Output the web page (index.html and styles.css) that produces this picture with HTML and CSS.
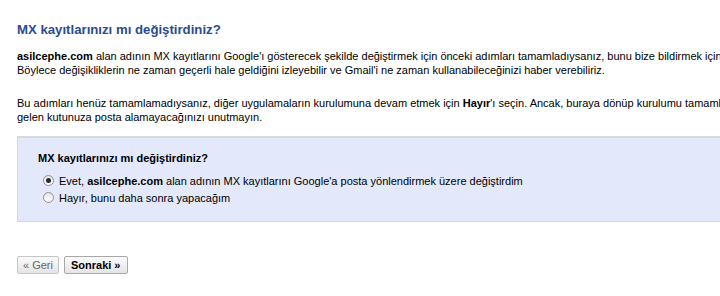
FILE: index.html
```html
<!DOCTYPE html>
<html lang="tr">
<head>
  <meta charset="UTF-8" />
  <title>MX kayıtları</title>
  <link rel="stylesheet" href="styles.css">
</head>
<body>
  <div class="page">
    <h2>MX kayıtlarınızı mı değiştirdiniz?</h2>
    <p><b>asilcephe.com</b> alan adının MX kayıtlarını Google'ı gösterecek şekilde değiştirmek için önceki adımları tamamladıysanız, bunu bize bildirmek için <b>Evet</b>'i seçin.<br>
    Böylece değişikliklerin ne zaman geçerli hale geldiğini izleyebilir ve Gmail'i ne zaman kullanabileceğinizi haber verebiliriz.</p>
    <p class="last">Bu adımları henüz tamamlamadıysanız, diğer uygulamaların kurulumuna devam etmek için <b>Hayır</b>'ı seçin. Ancak, buraya dönüp kurulumu tamamlayana kadar<br>
    gelen kutunuza posta alamayacağınızı unutmayın.</p>

    <div class="question-box">
      <div class="question-title">MX kayıtlarınızı mı değiştirdiniz?</div>
      <label class="option"><input type="radio" name="mx" checked><span>Evet, <b>asilcephe.com</b> alan adının MX kayıtlarını Google'a posta yönlendirmek üzere değiştirdim</span></label>
      <label class="option"><input type="radio" name="mx"><span>Hayır, bunu daha sonra yapacağım</span></label>
    </div>

    <div class="buttons">
      <button class="btn">« Geri</button>
      <button class="btn primary">Sonraki »</button>
    </div>
  </div>
</body>
</html>
```

FILE: styles.css
```css
* {
  box-sizing: border-box;
  margin: 0;
  padding: 0;
}

body {
  background: #fff;
  font-family: "Liberation Sans", Arial, sans-serif;
  font-size: 11px;
  color: #000;
  overflow: hidden;
}

.page {
  padding: 22px 0 0 17px;
  width: 900px;
}

h2 {
  font-size: 13.2px;
  font-weight: bold;
  color: #2a4b92;
  line-height: 16px;
  margin-bottom: 11px;
}

p {
  line-height: 14px;
  margin-bottom: 19px;
  white-space: nowrap;
}

p.last {
  margin-bottom: 12px;
}

.question-box {
  background: #e3e8fb;
  border-top: 2px solid #d6d8de;
  border-left: 1px solid #d6d8de;
  border-bottom: 1px solid #d6d8de;
  padding: 14px 0 15px 20px;
}

.question-title {
  font-weight: bold;
  margin-bottom: 8px;
}

.option {
  display: flex;
  align-items: center;
  gap: 5px;
  height: 17px;
  padding-left: 5px;
}

.option input {
  appearance: none;
  -webkit-appearance: none;
  width: 11px;
  height: 11px;
  margin: 0;
  border: 1px solid #8e8f94;
  border-radius: 50%;
  background: linear-gradient(#e6e6e6, #ffffff);
  display: grid;
  place-items: center;
}

.option input:checked::after {
  content: "";
  width: 5px;
  height: 5px;
  border-radius: 50%;
  background: #2a2a2a;
}

.buttons {
  display: flex;
  gap: 5px;
  margin-top: 34px;
}

.btn {
  font-family: "Liberation Sans", Arial, sans-serif;
  font-size: 11px;
  height: 18px;
  padding: 0 5px;
  background: linear-gradient(#fbfbfb, #e4e4e4);
  border: 1px solid #c6c6c6;
  border-radius: 2px;
  color: #666;
}

.btn.primary {
  font-weight: bold;
  color: #000;
  border-color: #a8a8a8;
  padding: 0 6px;
}
```
